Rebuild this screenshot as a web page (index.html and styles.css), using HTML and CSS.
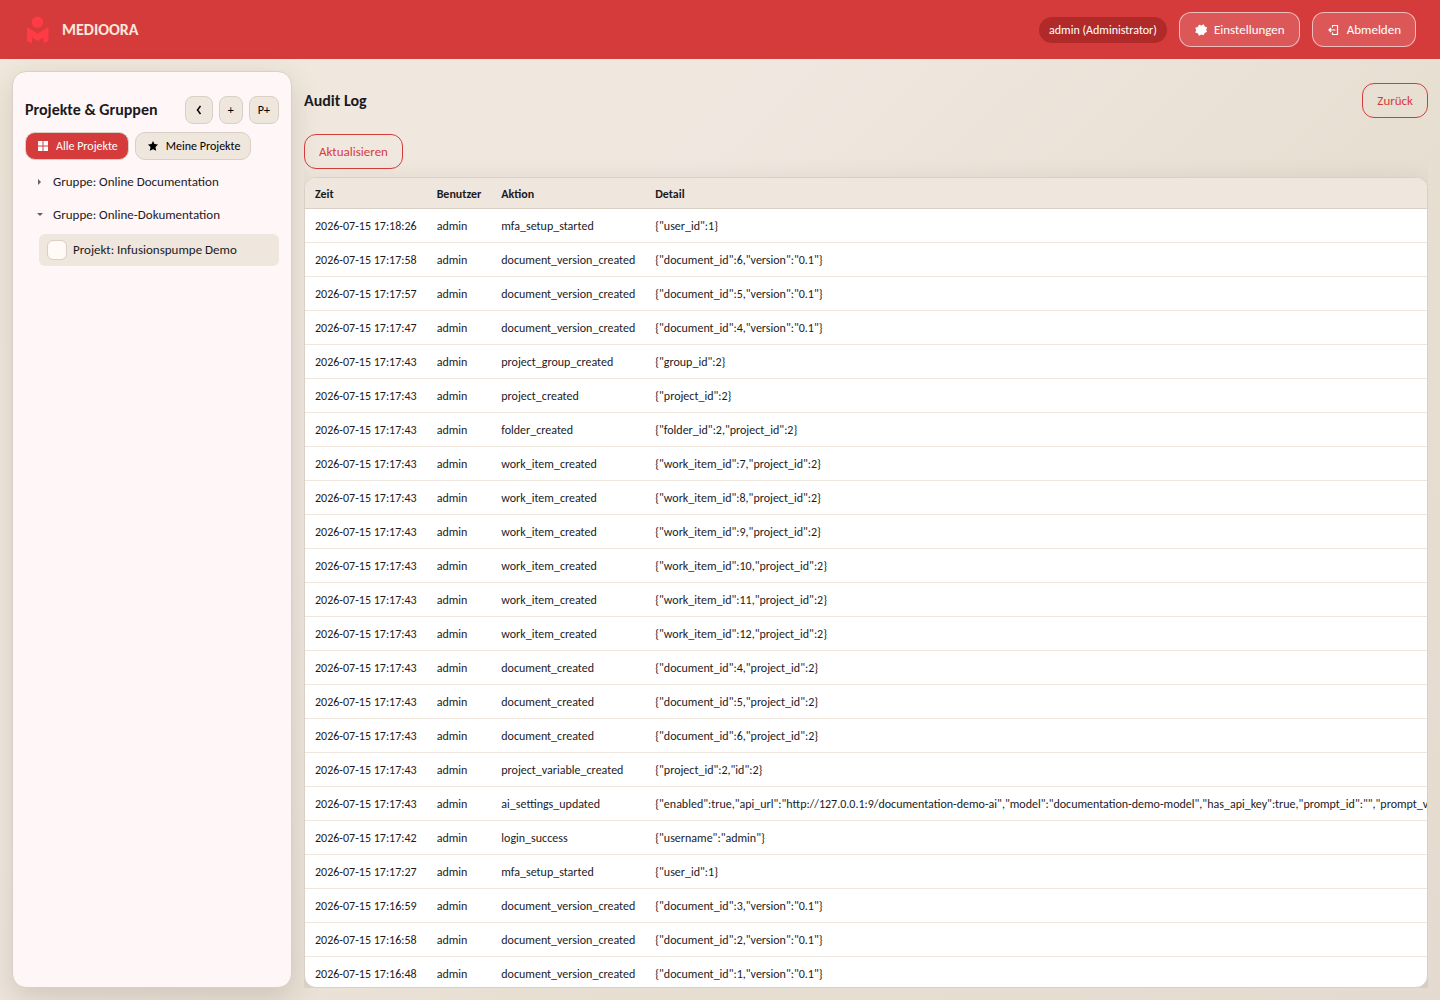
FILE: index.html
```
<!DOCTYPE html>
<html lang="de">
<head>
  <meta charset="UTF-8">
  <meta name="viewport" content="width=device-width, initial-scale=1.0">
  <title>MEDIOORA - Audit Log</title>
  <link rel="stylesheet" href="styles.css">
</head>
<body>
  <header class="topbar">
    <div class="brand">
      <svg class="brand-logo" viewBox="0 0 28 28" aria-hidden="true">
        <circle cx="13.5" cy="6.2" r="5.7"/>
        <path d="M3 11 L13.5 17.6 L24.5 11 V25 L19.5 27.5 V21.5 L13.5 25 L8 21.5 V27.5 L3 25 Z"/>
      </svg>
      <span class="brand-name">MEDIOORA</span>
    </div>
    <div class="topbar-actions">
      <span class="user-badge">admin (Administrator)</span>
      <button type="button" class="btn btn-top">
        <svg class="icon" viewBox="0 0 14 14" aria-hidden="true">
          <path fill="currentColor" d="M5 1.8 L7.4 2.6 L9.6 1.3 L10.8 3.6 L13.2 4.4 L12.2 6.6 L13 9 L10.8 9.8 L9.6 12.2 L7.2 11.4 L5 12.7 L3.8 10.2 L1.2 9.6 L2.2 7.2 L1.2 4.8 L3.8 4 Z"/>
        </svg>
        Einstellungen
      </button>
      <button type="button" class="btn btn-top">
        <svg class="icon" viewBox="0 0 14 14" aria-hidden="true">
          <path fill="none" stroke="currentColor" stroke-width="1.2" d="M5.5 4.5 V2.5 H10.5 V11.5 H5.5 V9.5 M8.5 7 H2 M4 5 L2 7 L4 9"/>
        </svg>
        Abmelden
      </button>
    </div>
  </header>

  <div class="layout">
    <aside class="sidebar">
      <div class="sidebar-head">
        <h2>Projekte &amp; Gruppen</h2>
        <button type="button" class="btn-mini" aria-label="Einklappen">
          <svg class="chevron" viewBox="0 0 10 10" aria-hidden="true">
            <path d="M6.5 1 L3.5 5 L6.5 9"/>
          </svg>
        </button>
        <button type="button" class="btn-mini">+</button>
        <button type="button" class="btn-mini">P+</button>
      </div>
      <div class="filters">
        <button type="button" class="chip active">
          <svg class="chip-icon" viewBox="0 0 10 10" aria-hidden="true">
            <path fill="currentColor" d="M0 0 H4.5 V4.5 H0 Z M5.5 0 H10 V4.5 H5.5 Z M0 5.5 H4.5 V10 H0 Z M5.5 5.5 H10 V10 H5.5 Z"/>
          </svg>
          Alle Projekte
        </button>
        <button type="button" class="chip">
          <svg class="chip-icon" viewBox="0 0 10 10" aria-hidden="true">
            <path fill="currentColor" d="M5 0 L6.5 3 L10 3.5 L7.5 6 L8.2 9.8 L5 8.2 L1.8 9.8 L2.5 6 L0 3.5 L3.5 3 Z"/>
          </svg>
          Meine Projekte
        </button>
      </div>
      <ul class="tree">
        <li class="group">
          <span class="caret caret-closed"></span>Gruppe: Online Documentation
        </li>
        <li class="group">
          <span class="caret caret-open"></span>Gruppe: Online-Dokumentation
        </li>
        <li>
          <label class="project">
            <input type="checkbox" class="project-check">
            Projekt: Infusionspumpe Demo
          </label>
        </li>
      </ul>
    </aside>

    <main class="content">
      <div class="content-head">
        <h1>Audit Log</h1>
        <button type="button" class="btn btn-outline">Zurück</button>
      </div>
      <div class="toolbar">
        <button type="button" class="btn btn-outline">Aktualisieren</button>
      </div>
      <div class="table-wrap">
        <table class="audit">
          <thead>
            <tr>
              <th>Zeit</th>
              <th>Benutzer</th>
              <th>Aktion</th>
              <th>Detail</th>
            </tr>
          </thead>
          <tbody>
            <tr><td>2026-07-15 17:18:26</td><td>admin</td><td>mfa_setup_started</td><td>{"user_id":1}</td></tr>
            <tr><td>2026-07-15 17:17:58</td><td>admin</td><td>document_version_created</td><td>{"document_id":6,"version":"0.1"}</td></tr>
            <tr><td>2026-07-15 17:17:57</td><td>admin</td><td>document_version_created</td><td>{"document_id":5,"version":"0.1"}</td></tr>
            <tr><td>2026-07-15 17:17:47</td><td>admin</td><td>document_version_created</td><td>{"document_id":4,"version":"0.1"}</td></tr>
            <tr><td>2026-07-15 17:17:43</td><td>admin</td><td>project_group_created</td><td>{"group_id":2}</td></tr>
            <tr><td>2026-07-15 17:17:43</td><td>admin</td><td>project_created</td><td>{"project_id":2}</td></tr>
            <tr><td>2026-07-15 17:17:43</td><td>admin</td><td>folder_created</td><td>{"folder_id":2,"project_id":2}</td></tr>
            <tr><td>2026-07-15 17:17:43</td><td>admin</td><td>work_item_created</td><td>{"work_item_id":7,"project_id":2}</td></tr>
            <tr><td>2026-07-15 17:17:43</td><td>admin</td><td>work_item_created</td><td>{"work_item_id":8,"project_id":2}</td></tr>
            <tr><td>2026-07-15 17:17:43</td><td>admin</td><td>work_item_created</td><td>{"work_item_id":9,"project_id":2}</td></tr>
            <tr><td>2026-07-15 17:17:43</td><td>admin</td><td>work_item_created</td><td>{"work_item_id":10,"project_id":2}</td></tr>
            <tr><td>2026-07-15 17:17:43</td><td>admin</td><td>work_item_created</td><td>{"work_item_id":11,"project_id":2}</td></tr>
            <tr><td>2026-07-15 17:17:43</td><td>admin</td><td>work_item_created</td><td>{"work_item_id":12,"project_id":2}</td></tr>
            <tr><td>2026-07-15 17:17:43</td><td>admin</td><td>document_created</td><td>{"document_id":4,"project_id":2}</td></tr>
            <tr><td>2026-07-15 17:17:43</td><td>admin</td><td>document_created</td><td>{"document_id":5,"project_id":2}</td></tr>
            <tr><td>2026-07-15 17:17:43</td><td>admin</td><td>document_created</td><td>{"document_id":6,"project_id":2}</td></tr>
            <tr><td>2026-07-15 17:17:43</td><td>admin</td><td>project_variable_created</td><td>{"project_id":2,"id":2}</td></tr>
            <tr><td>2026-07-15 17:17:43</td><td>admin</td><td>ai_settings_updated</td><td>{"enabled":true,"api_url":"http://127.0.0.1:9/documentation-demo-ai","model":"documentation-demo-model","has_api_key":true,"prompt_id":"","prompt_version":""}</td></tr>
            <tr><td>2026-07-15 17:17:42</td><td>admin</td><td>login_success</td><td>{"username":"admin"}</td></tr>
            <tr><td>2026-07-15 17:17:27</td><td>admin</td><td>mfa_setup_started</td><td>{"user_id":1}</td></tr>
            <tr><td>2026-07-15 17:16:59</td><td>admin</td><td>document_version_created</td><td>{"document_id":3,"version":"0.1"}</td></tr>
            <tr><td>2026-07-15 17:16:58</td><td>admin</td><td>document_version_created</td><td>{"document_id":2,"version":"0.1"}</td></tr>
            <tr><td>2026-07-15 17:16:48</td><td>admin</td><td>document_version_created</td><td>{"document_id":1,"version":"0.1"}</td></tr>
          </tbody>
        </table>
      </div>
    </main>
  </div>
</body>
</html>
```

FILE: styles.css
```
:root {
  --red: #d63b3b;
  --red-dark: #b02a2a;
  --sand: #efe6dd;
  --line: #d9cfc4;
  --text: #1b1b1f;
  --shadow: 0 10px 30px rgba(60, 40, 20, 0.16);
}

* {
  box-sizing: border-box;
}

body {
  margin: 0;
  height: 100vh;
  display: flex;
  flex-direction: column;
  overflow: hidden;
  font-family: Calibri, Carlito, Lato, "Noto Sans", sans-serif;
  font-size: 13px;
  line-height: 16px;
  color: var(--text);
  background: linear-gradient(135deg, #f0e8dc 0%, #f0e8e0 35%, #e7dfd2 62%, #e5dacf 100%);
}

h1,
h2 {
  margin: 0;
  font-size: 16px;
  line-height: 20px;
}

button {
  font: inherit;
  cursor: pointer;
}

/* Top bar */
.topbar {
  display: flex;
  align-items: center;
  justify-content: space-between;
  padding: 12px 24px;
  background: var(--red);
  color: #fff;
}

.brand {
  display: flex;
  align-items: center;
  gap: 10px;
}

.brand-logo {
  width: 28px;
  height: 28px;
  fill: #ff3b45;
}

.brand-name {
  font-size: 16px;
  font-weight: bold;
  color: #f8e9df;
}

.topbar-actions {
  display: flex;
  align-items: center;
  gap: 12px;
}

.user-badge {
  padding: 5px 10px;
  border-radius: 13px;
  background: var(--red-dark);
  font-size: 12px;
}

.btn {
  display: inline-flex;
  align-items: center;
  gap: 6px;
  height: 35px;
  padding: 0 14px;
  border: 1px solid;
  border-radius: 12px;
}

.btn-top {
  border-color: rgba(255, 255, 255, 0.6);
  background: rgba(255, 255, 255, 0.15);
  color: #fff;
}

.btn-outline {
  border-color: var(--red);
  background: transparent;
  color: var(--red);
}

.icon {
  width: 14px;
  height: 14px;
}

/* Page layout */
.layout {
  flex: 1;
  min-height: 0;
  display: grid;
  grid-template-columns: 280px minmax(0, 1fr);
  gap: 12px;
  padding: 12px;
}

.sidebar {
  padding: 24px 12px 12px;
  border: 1px solid var(--line);
  border-radius: 14px;
  background: #fff6f7;
  box-shadow: var(--shadow);
}

.sidebar-head {
  display: flex;
  align-items: center;
  gap: 6px;
}

.sidebar-head h2 {
  flex: 1;
}

.btn-mini {
  height: 28px;
  padding: 0 8px;
  border: 1px solid var(--line);
  border-radius: 8px;
  background: var(--sand);
  color: #000;
  font-size: 12px;
}

.chevron {
  display: block;
  width: 10px;
  height: 10px;
  fill: none;
  stroke: #000;
  stroke-width: 1.5;
}

.filters {
  display: flex;
  gap: 6px;
  margin-top: 8px;
}

.chip {
  display: inline-flex;
  align-items: center;
  gap: 8px;
  height: 28px;
  padding: 0 10px 0 12px;
  border: 1px solid var(--line);
  border-radius: 10px;
  background: var(--sand);
  color: #000;
  font-size: 12px;
}

.chip.active {
  background: var(--red);
  color: #fff;
}

.chip-icon {
  width: 10px;
  height: 10px;
}

.tree {
  margin: 5px 0 0;
  padding: 0;
  list-style: none;
}

.group {
  display: flex;
  align-items: center;
  height: 33px;
  padding-left: 12px;
}

.caret {
  width: 16px;
}

.caret::before {
  content: "";
  display: block;
  width: 0;
  border: 3px solid transparent;
}

.caret-closed::before {
  margin-left: 1px;
  border-left-color: #6b5f55;
  border-right: 0;
}

.caret-open::before {
  border-top-color: #6b5f55;
  border-bottom: 0;
}

.project {
  display: flex;
  align-items: center;
  gap: 6px;
  height: 32px;
  margin: 3px 0 0 14px;
  padding: 0 8px;
  border-radius: 6px;
  background: var(--sand);
}

.project-check {
  appearance: none;
  width: 20px;
  height: 20px;
  margin: 0;
  border: 1px solid var(--line);
  border-radius: 6px;
  background: #fffaf6;
}

/* Audit log */
.content {
  display: flex;
  flex-direction: column;
  min-height: 0;
  padding-top: 12px;
  overflow: hidden;
}

.content-head {
  display: flex;
  align-items: center;
  justify-content: space-between;
}

.toolbar {
  margin: 16px 0 8px;
}

.table-wrap {
  flex: 1;
  min-height: 0;
  overflow: hidden;
  border: 1px solid var(--line);
  border-radius: 12px;
  background: #fff;
  box-shadow: var(--shadow);
}

.audit {
  width: 100%;
  border-collapse: separate;
  border-spacing: 0;
  font-size: 12px;
  white-space: nowrap;
}

.audit th,
.audit td {
  height: 34px;
  padding: 1px 10px 0;
  border-bottom: 1px solid #efe6dd;
  text-align: left;
}

.audit th {
  height: 31px;
  border-bottom-color: var(--line);
  background: var(--sand);
}
```
